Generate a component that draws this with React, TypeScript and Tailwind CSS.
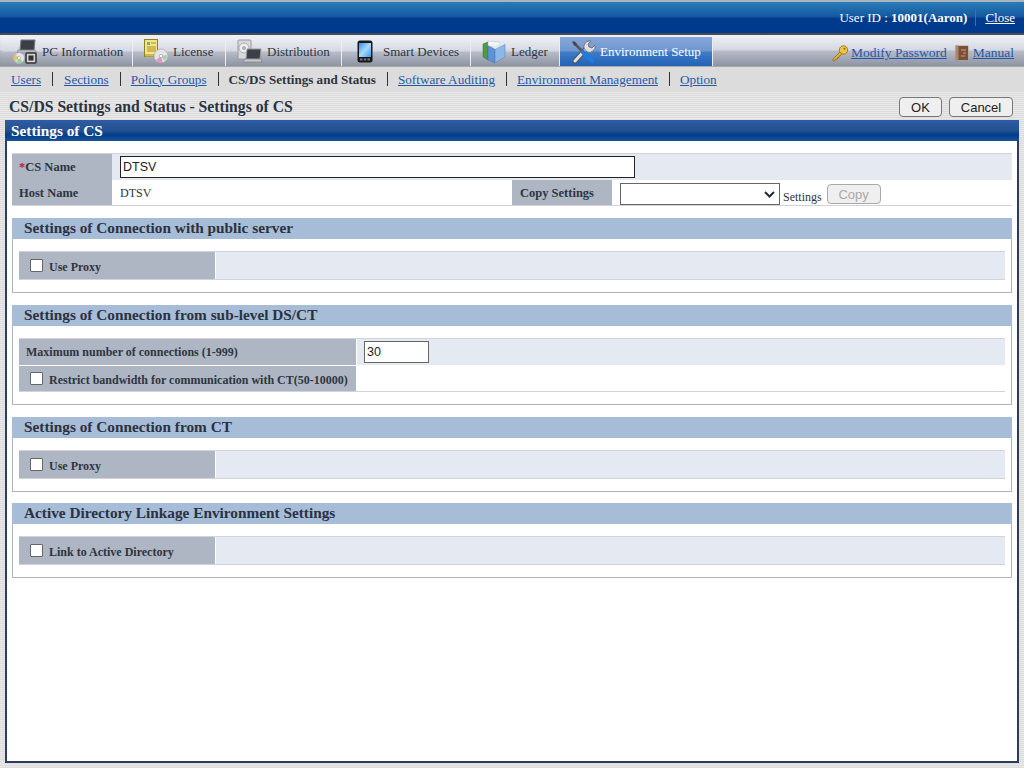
import type { ReactNode } from 'react';

const serif = 'font-["Liberation_Serif",serif]';

function PcIcon() {
  return (
    <svg width="24" height="25" viewBox="0 0 24 25">
      <path d="M8 1h14l-1 10H7z" fill="#3a3f48" stroke="#777" />
      <path d="M5 11h17l2 3H4z" fill="#b9bcc2" stroke="#666" strokeWidth="0.5" />
      <circle cx="6" cy="19" r="5.500" fill="#e4e4ea" stroke="#999" strokeWidth="0.5" />
      <path d="M6 19 2 15a6 6 0 0 0 0 8z" fill="#e9c26c" />
      <path d="M6 19l4 4a6 6 0 0 1-7 1z" fill="#9ad0a8" />
      <circle cx="6" cy="19" r="1.500" fill="#fff" stroke="#888" strokeWidth="0.5" />
      <rect x="13" y="14" width="10" height="10" rx="1" fill="#d0d0d0" stroke="#333" strokeWidth="1.5" />
      <rect x="15.500" y="16.500" width="5" height="5" fill="#333" />
    </svg>
  );
}

function LicenseIcon() {
  return (
    <svg width="25" height="25" viewBox="0 0 25 25">
      <rect x="0.500" y="0.500" width="13" height="17" fill="#f2e48a" stroke="#8a8418" />
      <rect x="1" y="15" width="12" height="2.500" fill="#cdbb4b" />
      <rect x="3" y="3" width="3" height="3" fill="#7bb36a" />
      <path d="M7 4h5M3 8h9M3 10h9M3 12h9" stroke="#b08a2a" />
      <circle cx="17" cy="17" r="7" fill="#e3e3e8" stroke="#999" strokeWidth="0.5" />
      <path d="M17 17 12 21a7 7 0 0 0 7 3z" fill="#d99ac6" />
      <path d="M17 17 21 22a7 7 0 0 0 2-6z" fill="#a4d6a4" />
      <circle cx="17" cy="17" r="1.700" fill="#fff" stroke="#888" strokeWidth="0.5" />
    </svg>
  );
}

function DistributionIcon() {
  return (
    <svg width="26" height="25" viewBox="0 0 26 25">
      <rect x="1" y="1" width="13" height="19" rx="1" fill="#d9dade" stroke="#999" />
      <circle cx="7" cy="9" r="5" fill="#eee" stroke="#888" strokeWidth="0.6" />
      <circle cx="7" cy="9" r="1.500" fill="#a9c6dc" stroke="#777" strokeWidth="0.5" />
      <path d="M10 10h14l-1 10H9z" fill="#3b3f47" stroke="#999" />
      <path d="M8 20h16l1 3H6z" fill="#c5c7cc" stroke="#666" strokeWidth="0.5" />
    </svg>
  );
}

function PhoneIcon() {
  return (
    <svg width="16" height="23" viewBox="0 0 16 23">
      <defs>
        <linearGradient id="phoneScreen" x1="0" y1="0" x2="1" y2="1">
          <stop offset="0" stopColor="#2f8fe6" />
          <stop offset="0.5" stopColor="#a8dcf8" />
          <stop offset="1" stopColor="#3a97e6" />
        </linearGradient>
      </defs>
      <rect x="0.500" y="0.500" width="15" height="22" rx="2.500" fill="#16181c" />
      <rect x="2" y="3" width="12" height="14" fill="url(#phoneScreen)" />
      <rect x="3" y="18.500" width="2.500" height="2" fill="#777" />
      <rect x="6.800" y="18.500" width="2.500" height="2" fill="#777" />
      <rect x="10.500" y="18.500" width="2.500" height="2" fill="#777" />
    </svg>
  );
}

function LedgerIcon() {
  return (
    <svg width="24" height="25" viewBox="0 0 24 25">
      <path d="M1 5l5-2v18l-5-3z" fill="#4f9a45" stroke="#33702e" strokeWidth="0.5" />
      <path d="M6 2l12 1v5L6 7z" fill="#f4f4f4" stroke="#bbb" strokeWidth="0.5" />
      <path d="M6 7l7 3v14l-7-3z" fill="#5f93d6" stroke="#3f6fae" strokeWidth="0.5" />
      <path d="M13 10l10-5v13l-10 6z" fill="#8db7e6" stroke="#4f7fbe" strokeWidth="0.5" />
      <path d="M13 10l10-5-3-1-10 4z" fill="#dfe9f4" />
    </svg>
  );
}

function ToolsIcon() {
  return (
    <svg width="25" height="24" viewBox="0 0 25 24">
      {/* wrench */}
      <path d="M4 21 15 9" stroke="#555" strokeWidth="5" strokeLinecap="round" />
      <path d="M4 21 15 9" stroke="#dcdfe3" strokeWidth="3" strokeLinecap="round" />
      <path d="M13 8a6 6 0 0 1 7-7l-3 3 1 3 3 1 3-3a6 6 0 0 1-8 7z" fill="#dcdfe3" stroke="#666" strokeWidth="0.8" />
      {/* screwdriver */}
      <path d="M3 3l9 9" stroke="#555" strokeWidth="2.500" />
      <path d="M1 2l2-1 3 3-2 2z" fill="#444" />
      <path d="M12 12l9 9" stroke="#1e7be0" strokeWidth="4.500" strokeLinecap="round" />
    </svg>
  );
}

function KeyIcon() {
  return (
    <svg width="17" height="17" viewBox="0 0 17 17">
      <path d="M1 14l7-7 2 2-2 2-1 0 0 1.500-1.500 0 0 1.500-2 0-1 2H1z" fill="#e0b232" stroke="#8f6c12" strokeWidth="0.7" />
      <circle cx="11.500" cy="5" r="4.200" fill="#ecc347" stroke="#8f6c12" strokeWidth="0.8" />
      <circle cx="12.500" cy="3.800" r="1" fill="#8f6c12" />
    </svg>
  );
}

function BookIcon() {
  return (
    <svg width="14" height="16" viewBox="0 0 14 16">
      <rect x="0.500" y="0.500" width="13" height="15" fill="#b5a68f" />
      <rect x="1" y="1" width="12" height="14" fill="#7c5034" />
      <rect x="0.500" y="0.500" width="3" height="15" fill="#a88870" />
      <path d="M6 5h5M8 8h3M6 11h4" stroke="#c0a285" />
    </svg>
  );
}

const tabs: { label: string; icon: ReactNode; w: string; gap: string; pl: string; active?: boolean }[] = [
  { label: 'PC Information', icon: <PcIcon />, w: 'w-[131px]', gap: 'gap-[5px]', pl: 'pl-[11px]' },
  { label: 'License', icon: <LicenseIcon />, w: 'w-[93px]', gap: 'gap-[4px]', pl: 'pl-[11px]' },
  { label: 'Distribution', icon: <DistributionIcon />, w: 'w-[116px]', gap: 'gap-[4px]', pl: 'pl-[11px]' },
  { label: 'Smart Devices', icon: <PhoneIcon />, w: 'w-[129px]', gap: 'gap-[10px]', pl: 'pl-[15px]' },
  { label: 'Ledger', icon: <LedgerIcon />, w: 'w-[89px]', gap: 'gap-[5px]', pl: 'pl-[11px]' },
  { label: 'Environment Setup', icon: <ToolsIcon />, w: 'w-[153px]', gap: 'gap-[4px]', pl: 'pl-[11px]', active: true },
];

const subnav = ['Users', 'Sections', 'Policy Groups', 'CS/DS Settings and Status', 'Software Auditing', 'Environment Management', 'Option'];

function Tab({ label, icon, w, gap, pl, active }: (typeof tabs)[number]) {
  return (
    <div
      className={`${w} ${gap} ${pl} h-[29px] flex items-center shrink-0 border-r border-[#eceef3] text-[13px] ${
        active
          ? 'text-white bg-[linear-gradient(#86a7d9_0%,#7096d0_48%,#3f7cc8_52%,#2261b4_100%)]'
          : 'text-[#2f3540] bg-[linear-gradient(#eef0f6_0%,#d6d9e2_48%,#b8bcc9_52%,#8e93a2_100%)]'
      }`}
    >
      <span className="w-fit shrink-0 flex">{icon}</span>
      <span className="whitespace-nowrap pt-px">{label}</span>
    </div>
  );
}

function FlatButton({ children, disabled, className }: { children: ReactNode; disabled?: boolean; className: string }) {
  return (
    <button
      disabled={disabled}
      className={`${className} font-["Liberation_Sans",sans-serif] text-[13px] leading-none rounded-[4px] border ${
        disabled ? 'border-[#a8a8a8] text-[#a9a9a9] bg-[#efefef]' : 'border-[#767676] text-[#222] bg-[#efefef]'
      }`}
    >
      {children}
    </button>
  );
}

function CheckLabel({ label }: { label: string }) {
  return (
    <label className="flex items-center pl-[11px]">
      <input type="checkbox" className="appearance-none w-[13px] h-[13px] mr-[6px] shrink-0 bg-white border border-[#666] rounded-[1px]" />
      <span className="font-bold whitespace-nowrap pt-[3px]">{label}</span>
    </label>
  );
}

function Section({ title, children, className = 'mt-[12px]' }: { title: string; children: ReactNode; className?: string }) {
  return (
    <div className={className}>
      <div className="h-[21px] pl-[12px] bg-[#a7bcd7] text-[15.3px] font-bold text-[#2b3240] leading-[20px] whitespace-nowrap">{title}</div>
      <div className="border border-t-0 border-[#a9b5c4] py-[12px] px-[6px]">{children}</div>
    </div>
  );
}

function SingleCheck({ label }: { label: string }) {
  return (
    <div className="flex h-[29px] border-t border-b border-[#d0d3d8] bg-[#e5e9f1] text-[12px] text-[#2f3540]">
      <div className="w-[197px] bg-[#adb6c2] flex items-center border-r border-white">
        <CheckLabel label={label} />
      </div>
    </div>
  );
}

export default function App() {
  return (
    <div className={`w-[1024px] h-[768px] flex flex-col overflow-hidden ${serif} bg-[#d9d9d9]`}>
      {/* Top bar */}
      <div className="h-[33px] border-t-2 border-[#a9b4bd] bg-[linear-gradient(#2a7db8_0%,#14589f_48%,#003a8c_52%,#003a8c_100%)] flex items-center justify-end pr-[9px] pt-[1px] text-[13px] text-white">
        <span className="whitespace-nowrap">
          User ID : <b>10001(Aaron)</b>
        </span>
        <span className="w-px h-[16px] bg-[#3f6fae] ml-[8px] mr-[9px]" />
        <a className="underline" href="#">Close</a>
      </div>

      {/* Main tabs */}
      <div className="h-[34px] border-t-2 border-b border-t-[#444c58] border-b-[#a9a9a9] bg-[linear-gradient(#f0f1f6_0%,#d5d8e2_48%,#b8bcc9_52%,#8e93a2_100%)] flex items-start pl-[2px] pt-[2px]">
        {tabs.map((t) => (
          <Tab key={t.label} {...t} />
        ))}
        <div className="ml-auto flex items-center h-[29px] pr-[10px] text-[13.5px] pt-[3px]">
          <KeyIcon />
          <a href="#" className="underline text-[#1f5aa8] ml-[2px] mr-[8px] whitespace-nowrap">Modify Password</a>
          <BookIcon />
          <a href="#" className="underline text-[#1f5aa8] ml-[4px]">Manual</a>
        </div>
      </div>

      {/* Sub navigation */}
      <div className="h-[25px] flex items-center pl-[11px] text-[13.2px] bg-[#dcdcdc]">
        {subnav.map((item, i) => (
          <div key={item} className="flex items-center">
            {i > 0 && <span className={`w-px h-[14px] bg-[#333] ml-[11px] ${i === 1 ? 'mr-[11px]' : 'mr-[10px]'}`} />}
            {item.startsWith('CS/DS') ? (
              <span className="font-bold text-[13.1px] text-[#2f3540] whitespace-nowrap">{item}</span>
            ) : (
              <a href="#" className="underline text-[#1f5aa8] whitespace-nowrap">{item}</a>
            )}
          </div>
        ))}
      </div>

      {/* Striped body */}
      <div className="flex-1 flex flex-col bg-[repeating-linear-gradient(#e8e8e8_0px,#e8e8e8_1px,#dcdcdc_1px,#dcdcdc_2px)] pb-[5px]">
        <div className="h-[28px] flex items-center pl-[9px] pr-[11px] pt-[2px]">
          <h1 className="text-[15.7px] font-bold text-[#2b3240] whitespace-nowrap">CS/DS Settings and Status - Settings of CS</h1>
          <FlatButton className="ml-auto w-[43px] h-[20px]">OK</FlatButton>
          <FlatButton className="ml-[7px] w-[64px] h-[20px]">Cancel</FlatButton>
        </div>

        <div className="flex-1 mx-[5px] flex flex-col border-l-2 border-r-2 border-b-2 border-[#2c3c5e] bg-white">
          <div className="h-[21px] -mx-[2px] pl-[6px] text-[15.3px] font-bold text-white leading-[21px] bg-[linear-gradient(#2f5ba4_0%,#24518f_50%,#003f8c_70%,#1c4f96_100%)]">
            Settings of CS
          </div>

          <div className="px-[5px] pt-[12px] text-[12px] text-[#2f3540]">
            {/* CS fields */}
            <div className="flex h-[27px] border-t border-[#d0d3d8] bg-[#e5e9f1]">
              <div className="w-[100px] bg-[#adb6c2] font-bold pl-[7px] flex items-center text-[12.5px]">
                <span className="text-[#c0242c]">*</span>CS Name
              </div>
              <div className="pl-[8px] flex items-center">
                <input
                  defaultValue="DTSV"
                  className='w-[515px] h-[22px] bg-white border border-[#222] px-[2px] font-["Liberation_Sans",sans-serif] text-[12.5px] text-[#222]'
                />
              </div>
            </div>
            <div className="flex h-[26px] border-b border-[#d0d3d8] bg-white">
              <div className="w-[100px] bg-[#adb6c2] font-bold pl-[7px] pt-px flex items-center text-[12.5px]">Host Name</div>
              <div className="w-[400px] pl-[8px] flex items-center">DTSV</div>
              <div className="w-[100px] bg-[#adb6c2] font-bold pl-[8px] pt-px flex items-center text-[12.5px]">Copy Settings</div>
              <div className="pl-[8px] flex items-start pt-[3px]">
                <div className="relative w-[160px] h-[22px]">
                  <select className="appearance-none w-full h-full border border-[#666] bg-white" />
                  <svg className="absolute right-[5px] top-[8px]" width="11" height="7" viewBox="0 0 11 7" fill="none">
                    <path d="M1 1l4.500 4.500L10 1" stroke="#1f2937" strokeWidth="2" />
                  </svg>
                </div>
                <span className="ml-[3px] mt-[5px]">Settings</span>
                <FlatButton disabled className="ml-[5px] mt-px w-[54px] h-[20px]">Copy</FlatButton>
              </div>
            </div>

            <Section title="Settings of Connection with public server">
              <SingleCheck label="Use Proxy" />
            </Section>

            <Section title="Settings of Connection from sub-level DS/CT">
              <div className="border-b border-[#d0d3d8]">
                <div className="flex h-[27px] border-t border-[#d0d3d8] bg-[#e5e9f1]">
                  <div className="w-[338px] bg-[#adb6c2] font-bold pl-[7px] flex items-center border-r border-white">Maximum number of connections (1-999)</div>
                  <div className="pl-[7px] flex items-center">
                    <input
                      defaultValue="30"
                      className='w-[65px] h-[22px] bg-white border border-[#666] px-[2px] font-["Liberation_Sans",sans-serif] text-[12.5px] text-[#222]'
                    />
                  </div>
                </div>
                <div className="flex h-[26px] bg-white border-t border-white">
                  <div className="w-[338px] bg-[#adb6c2] flex items-center border-r border-white">
                    <CheckLabel label="Restrict bandwidth for communication with CT(50-10000)" />
                  </div>
                </div>
              </div>
            </Section>

            <Section title="Settings of Connection from CT">
              <SingleCheck label="Use Proxy" />
            </Section>

            <Section title="Active Directory Linkage Environment Settings" className="mt-[11px]">
              <SingleCheck label="Link to Active Directory" />
            </Section>
          </div>
        </div>
      </div>
    </div>
  );
}
